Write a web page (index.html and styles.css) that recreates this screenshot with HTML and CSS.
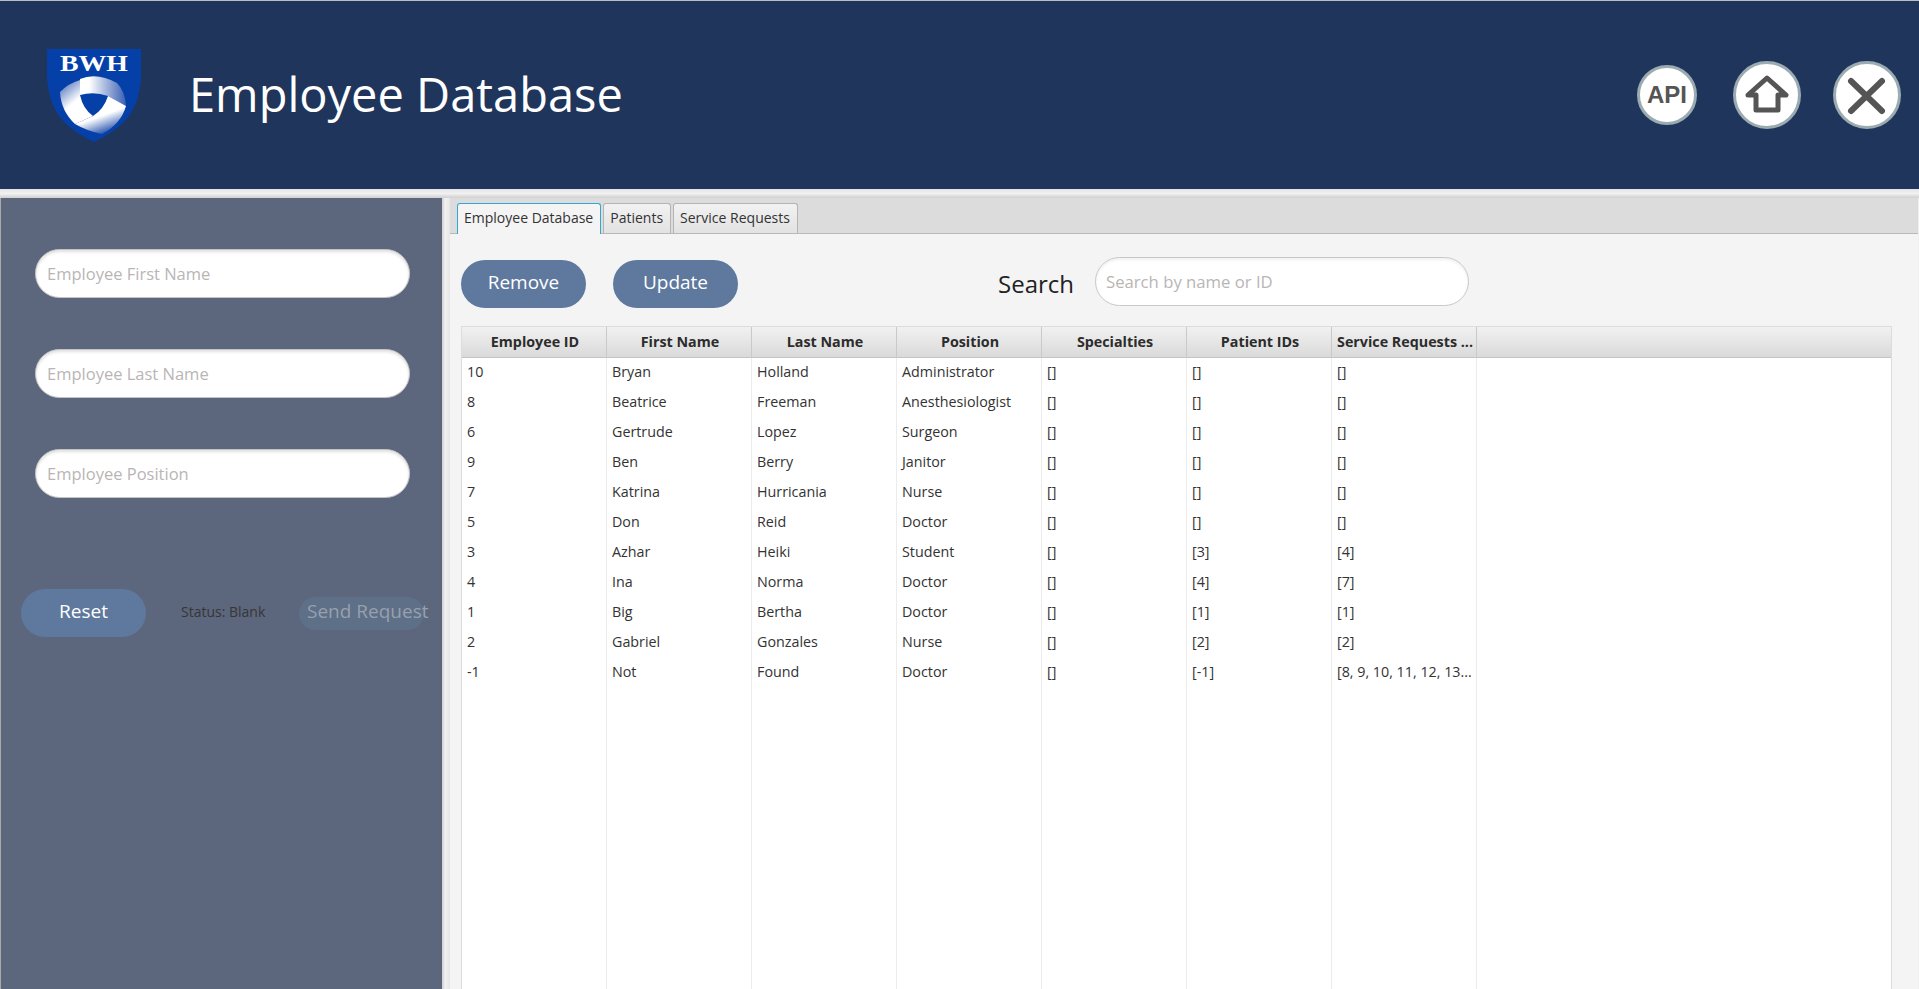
FILE: index.html
```html
<html>

<head>
  <title>Employee Database</title>
  <link rel="stylesheet" href="styles.css">
</head>

<body>

  <header class="topbar">
    <svg class="logo" viewBox="0 0 94 93" width="94" height="93">
      <defs>
        <linearGradient id="bandTop" x1="33" y1="0" x2="79" y2="0" gradientUnits="userSpaceOnUse">
          <stop offset="0.2" stop-color="#fff"/>
          <stop offset="1" stop-color="#3a60b4"/>
        </linearGradient>
        <linearGradient id="bandLeft" x1="13" y1="38" x2="30" y2="58" gradientUnits="userSpaceOnUse">
          <stop offset="0" stop-color="#5f7fc2"/>
          <stop offset="0.8" stop-color="#fff"/>
        </linearGradient>
        <linearGradient id="bandRight" x1="52" y1="64" x2="60" y2="86" gradientUnits="userSpaceOnUse">
          <stop offset="0.15" stop-color="#fff"/>
          <stop offset="1" stop-color="#0f3fa3"/>
        </linearGradient>
      </defs>
      <path d="M0 0H94V30Q92 50 86 60Q78 78 47 93Q16 78 8 60Q2 50 0 30Z" fill="#0540a8"/>
      <text class="logo-text" x="13" y="22" textLength="68" lengthAdjust="spacingAndGlyphs">BWH</text>
      <path d="M33 30Q50 23 70 34Q78 42 79 57L61 47Q47 42 33 46Z" fill="url(#bandTop)"/>
      <path d="M13 43Q22 34 33 31L33 46Q36 60 46 67L28 75Q14 62 13 43Z" fill="url(#bandLeft)"/>
      <path d="M46 67Q57 60 61 47L79 57Q74 75 55 85Q40 82 28 75Z" fill="url(#bandRight)"/>
    </svg>
    <h1 class="title">Employee Database</h1>
    <div class="top-actions">
      <button class="round-btn api-btn">API</button>
      <button class="round-btn">
        <svg viewBox="0 0 62 62" width="62" height="62">
          <path d="M12 31L31 14L50 31H42V46H20V31Z" fill="none" stroke="#555" stroke-width="5" stroke-linejoin="round"/>
        </svg>
      </button>
      <button class="round-btn">
        <svg viewBox="0 0 62 62" width="62" height="62">
          <path d="M15 17L46 47M46 17L15 47" fill="none" stroke="#555" stroke-width="6" stroke-linecap="round"/>
        </svg>
      </button>
    </div>
  </header>

  <div class="hsplit"></div>

  <div class="workspace">
    <aside class="sidebar">
      <input class="pill-input" type="text" placeholder="Employee First Name">
      <input class="pill-input" type="text" placeholder="Employee Last Name">
      <input class="pill-input" type="text" placeholder="Employee Position">
      <div class="form-actions">
        <button class="btn">Reset</button>
        <span class="status">Status: Blank</span>
        <button class="btn btn-disabled">Send Request</button>
      </div>
    </aside>

    <div class="vsplit"></div>

    <main class="content">
      <nav class="tabs">
        <a class="tab active">Employee Database</a>
        <a class="tab">Patients</a>
        <a class="tab">Service Requests</a>
      </nav>

      <div class="toolbar">
        <button class="btn">Remove</button>
        <button class="btn">Update</button>
        <label class="search-label">Search</label>
        <input class="search-input" type="text" placeholder="Search by name or ID">
      </div>

      <div class="table-wrap">
        <table class="grid">
          <thead>
            <tr>
              <th>Employee ID</th>
              <th>First Name</th>
              <th>Last Name</th>
              <th>Position</th>
              <th>Specialties</th>
              <th>Patient IDs</th>
              <th>Service Requests ...</th>
              <th class="rest"></th>
            </tr>
          </thead>
          <tbody>
            <tr><td>10</td><td>Bryan</td><td>Holland</td><td>Administrator</td><td>[]</td><td>[]</td><td>[]</td><td></td></tr>
            <tr><td>8</td><td>Beatrice</td><td>Freeman</td><td>Anesthesiologist</td><td>[]</td><td>[]</td><td>[]</td><td></td></tr>
            <tr><td>6</td><td>Gertrude</td><td>Lopez</td><td>Surgeon</td><td>[]</td><td>[]</td><td>[]</td><td></td></tr>
            <tr><td>9</td><td>Ben</td><td>Berry</td><td>Janitor</td><td>[]</td><td>[]</td><td>[]</td><td></td></tr>
            <tr><td>7</td><td>Katrina</td><td>Hurricania</td><td>Nurse</td><td>[]</td><td>[]</td><td>[]</td><td></td></tr>
            <tr><td>5</td><td>Don</td><td>Reid</td><td>Doctor</td><td>[]</td><td>[]</td><td>[]</td><td></td></tr>
            <tr><td>3</td><td>Azhar</td><td>Heiki</td><td>Student</td><td>[]</td><td>[3]</td><td>[4]</td><td></td></tr>
            <tr><td>4</td><td>Ina</td><td>Norma</td><td>Doctor</td><td>[]</td><td>[4]</td><td>[7]</td><td></td></tr>
            <tr><td>1</td><td>Big</td><td>Bertha</td><td>Doctor</td><td>[]</td><td>[1]</td><td>[1]</td><td></td></tr>
            <tr><td>2</td><td>Gabriel</td><td>Gonzales</td><td>Nurse</td><td>[]</td><td>[2]</td><td>[2]</td><td></td></tr>
            <tr><td>-1</td><td>Not</td><td>Found</td><td>Doctor</td><td>[]</td><td>[-1]</td><td>[8, 9, 10, 11, 12, 13...</td><td></td></tr>
            <tr class="filler"><td></td><td></td><td></td><td></td><td></td><td></td><td></td><td></td></tr>
          </tbody>
        </table>
      </div>
    </main>
  </div>

</body>

</html>
```

FILE: styles.css
```css
* {
  box-sizing: border-box;
}

html,
body {
  height: 100%;
}

body {
  margin: 0;
  overflow: hidden;
  display: flex;
  flex-direction: column;
  font-family: "Open Sans", "Noto Sans", sans-serif;
  background-color: #f0f0f0;
  color: #333;
}

/* top bar */
.topbar {
  height: 189px;
  flex: none;
  display: flex;
  align-items: center;
  padding-left: 47px;
  padding-right: 18px;
  background-color: #20355c;
  border-top: 1px solid #bdbdbd;
}

.logo {
  flex: none;
}

.logo-text {
  font-family: "Liberation Serif", serif;
  font-weight: bold;
  font-size: 23px;
  fill: #fff;
}

.title {
  margin: 0 0 2px 48px;
  font-size: 47px;
  font-weight: 400;
  color: #fff;
}

.top-actions {
  margin-left: auto;
  display: flex;
  align-items: center;
  gap: 32px;
}

.round-btn {
  width: 68px;
  height: 68px;
  padding: 0;
  display: flex;
  align-items: center;
  justify-content: center;
  border: 3px solid #9babb2;
  border-radius: 50%;
  background-color: #fff;
}

.api-btn {
  width: 60px;
  height: 60px;
  margin-right: 4px;
  font-family: "Liberation Sans", sans-serif;
  font-size: 24px;
  font-weight: bold;
  color: #555;
}

/* splitters */
.hsplit {
  height: 9px;
  flex: none;
  background: linear-gradient(#e4e4e4, #f1f1f1 50%, #cfcfcf);
}

.workspace {
  flex: 1;
  min-height: 0;
  display: flex;
}

.vsplit {
  width: 8px;
  flex: none;
  background: linear-gradient(90deg, #cfcfcf, #f1f1f1 40%, #e6e6e6);
}

/* left form */
.sidebar {
  width: 442px;
  flex: none;
  padding: 51px 0 0 34px;
  display: flex;
  flex-direction: column;
  align-items: flex-start;
  gap: 51px;
  background-color: #5c667d;
  border-left: 1px solid #aaa;
}

.pill-input {
  width: 375px;
  height: 49px;
  padding: 0 11px 1px;
  font-family: inherit;
  font-size: 16.5px;
  border: 1px solid #c4c4c4;
  border-radius: 25px;
  background-color: #fff;
  box-shadow: inset 0 2px 3px rgba(0, 0, 0, 0.12);
}

.pill-input::placeholder,
.search-input::placeholder {
  color: #b9b5b5;
  opacity: 1;
}

.form-actions {
  margin: 40px 0 0 -14px;
  display: flex;
  align-items: center;
}

.btn {
  width: 125px;
  height: 48px;
  flex: none;
  padding: 0 0 4px;
  font-family: inherit;
  font-size: 19px;
  color: #fff;
  border: none;
  border-radius: 24px;
  background-color: #5e799d;
}

.status {
  width: 153px;
  padding-left: 35px;
  padding-bottom: 4px;
  flex: none;
  font-size: 14px;
  color: #363636;
}

.btn-disabled {
  height: 33px;
  padding-left: 8px;
  text-align: left;
  white-space: nowrap;
  color: #98a0ad;
  background-color: #5e6f88;
}

/* right side */
.content {
  flex: 1;
  min-width: 0;
  display: flex;
  flex-direction: column;
  margin-right: 1px;
  background-color: #f4f4f4;
}

.tabs {
  height: 36px;
  flex: none;
  display: flex;
  align-items: flex-end;
  gap: 2px;
  padding-left: 7px;
  background-color: #dcdcdc;
  border-bottom: 1px solid #b8b8b8;
}

.tab {
  height: 30px;
  padding: 0 7px 3px 6px;
  display: flex;
  align-items: center;
  font-size: 14px;
  color: #333;
  border: 1px solid #b4b4b4;
  border-bottom: none;
  border-radius: 3px 3px 0 0;
  background: linear-gradient(#f2f2f2, #e2e2e2);
}

.tab.active {
  height: 31px;
  margin-bottom: -1px;
  border-color: #2fa9cf;
  background: #f4f4f4;
}

.toolbar {
  flex: none;
  display: flex;
  align-items: center;
  gap: 27px;
  padding: 23px 0 0 11px;
}

.search-label {
  margin-left: 233px;
  padding-bottom: 2px;
  font-size: 24px;
  color: #222;
}

.search-input {
  width: 374px;
  height: 49px;
  margin: 0 0 5px -6px;
  padding: 0 10px;
  font-family: inherit;
  font-size: 16.7px;
  border: 1px solid #c8c8c8;
  border-radius: 25px;
  background-color: #fff;
  box-shadow: inset 0 2px 3px rgba(0, 0, 0, 0.06);
}

/* table */
.table-wrap {
  flex: 1;
  min-height: 0;
  overflow: hidden;
  margin: 15px 26px 0 11px;
  background-color: #fff;
  border: 1px solid #dcdcdc;
  border-bottom: none;
}

.grid {
  width: 100%;
  table-layout: fixed;
  border-collapse: separate;
  border-spacing: 0;
  font-size: 14.3px;
}

.grid th {
  width: 145px;
  height: 31px;
  padding: 0 0 1px 2px;
  font-weight: bold;
  white-space: nowrap;
  overflow: hidden;
  color: #2c2c2c;
  background: linear-gradient(#f1f1f1, #dadada);
  border-right: 1px solid #c9c9c9;
  border-bottom: 1px solid #c4c4c4;
}

.grid th.rest {
  width: auto;
  border-right: none;
}

.grid td {
  height: 30px;
  padding: 0 0 3px 5px;
  white-space: nowrap;
  overflow: hidden;
  color: #333;
  border-right: 1px solid #ececec;
}

.grid td:last-child {
  border-right: none;
}

.filler td {
  height: 400px;
}
```
